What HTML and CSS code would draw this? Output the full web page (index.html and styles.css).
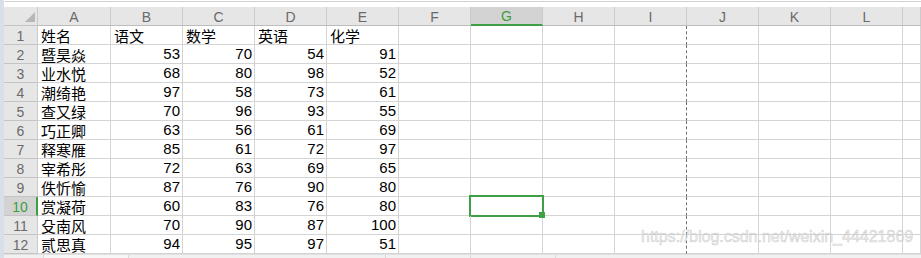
FILE: index.html
```html
<!DOCTYPE html>
<html lang="zh-CN">
<head>
    <meta charset="UTF-8">
    <title>Sheet1</title>
    <link rel="stylesheet" href="styles.css">
</head>
<body>
    <div class="app">
        <div class="side-strip"></div>
        <div class="main">
            <div class="top-bar"><span class="cut-text">216</span></div>
            <div class="sheet" id="sheet"></div>
            <div class="tab-bar">
                <span class="tab tab-a"></span>
                <span class="tab tab-b"></span>
                <span class="tab tab-c"></span>
                <span class="tab tab-d"></span>
                <span class="tab tab-e"></span>
            </div>
        </div>
        <div class="watermark">https://blog.csdn.net/weixin_44421869</div>
    </div>

    <script>
        const cols = ["A", "B", "C", "D", "E", "F", "G", "H", "I", "J", "K", "L", ""];
        const rows = [
            ["姓名", "语文", "数学", "英语", "化学"],
            ["暨昊焱", 53, 70, 54, 91],
            ["业水悦", 68, 80, 98, 52],
            ["潮绮艳", 97, 58, 73, 61],
            ["查又绿", 70, 96, 93, 55],
            ["巧正卿", 63, 56, 61, 69],
            ["释寒雁", 85, 61, 72, 97],
            ["宰希彤", 72, 63, 69, 65],
            ["佚忻愉", 87, 76, 90, 80],
            ["赏凝荷", 60, 83, 76, 80],
            ["殳南风", 70, 90, 87, 100],
            ["贰思真", 94, 95, 97, 51]
        ];
        const activeCol = 6;  // G
        const activeRow = 10;

        const sheet = document.getElementById("sheet");

        function cell(cls, text) {
            const div = document.createElement("div");
            div.className = cls;
            if (text !== undefined) div.textContent = text;
            sheet.appendChild(div);
            return div;
        }

        // column headers
        const corner = cell("hd corner");
        corner.appendChild(document.createElement("span")).className = "tri";
        cols.forEach((c, i) => {
            cell("hd col-hd" + (i === activeCol ? " active" : ""), c);
        });

        // body rows
        rows.forEach((row, r) => {
            const num = r + 1;
            cell("hd row-hd" + (num === activeRow ? " active" : ""), num);
            cols.forEach((c, i) => {
                let cls = "cell";
                let val = row[i];
                if (typeof val === "number") cls += " num";
                if (i === 8) cls += " page-break";
                if (i === activeCol && num === activeRow) cls += " selected";
                cell(cls, val === undefined ? "" : val);
            });
        });
    </script>
</body>
</html>
```

FILE: styles.css
```css
* {
    box-sizing: border-box;
}

body {
    margin: 0;
    background: #fff;
    overflow: hidden;
}

.app {
    display: flex;
    height: 258px;
    position: relative;
}

.side-strip {
    width: 4px;
    flex: none;
    background-color: #d9dfe9;
}

.main {
    flex: 1;
    display: flex;
    flex-direction: column;
}

.top-bar {
    height: 7px;
    border-top: 1px solid #fff;
    overflow: hidden;
    position: relative;
}

.top-bar::before {
    content: "";
    display: block;
    height: 1px;
    background-color: #d0d0d0;
    margin-left: 1px;
}

.cut-text {
    position: absolute;
    left: 98px;
    top: -11px;
    font: 12px "Liberation Sans", sans-serif;
    color: #222;
}

.sheet {
    display: grid;
    grid-template-columns: 34px 73px repeat(11, 72px) 1fr;
    grid-auto-rows: 19px;
    font-family: "Liberation Sans Narrow", "Liberation Sans", "Noto Sans CJK SC", sans-serif;
}

.hd {
    background-color: #e6e6e6;
    border-right: 1px solid #cbcbcb;
    border-bottom: 1px solid #c4c4c4;
    color: #6a6a6a;
    display: flex;
    align-items: center;
    justify-content: center;
    font-family: "Liberation Sans", sans-serif;
    font-size: 14px;
    padding-top: 1px;
}

.col-hd {
    border-bottom-color: #bcbcbc;
}

.corner {
    justify-content: flex-end;
    align-items: flex-end;
    padding: 0 2px 3px 0;
}

.tri {
    width: 0;
    height: 0;
    border-left: 10px solid transparent;
    border-bottom: 10px solid #b7b7b7;
}

.col-hd.active {
    background-color: #d3d3d3;
    color: #3c9e3c;
    border-bottom: 2px solid #3f9f44;
}

.row-hd.active {
    background-color: #d3d3d3;
    color: #3c9e3c;
    border-right: 2px solid #3f9f44;
}

.cell {
    border-right: 1px solid #d4d4d4;
    border-bottom: 1px solid #d4d4d4;
    font-family: "Noto Sans CJK SC", sans-serif;
    font-size: 15px;
    line-height: 17px;
    color: #000;
    padding: 0 2px 0 3px;
    display: flex;
    align-items: flex-end;
    white-space: nowrap;
    position: relative;
}

.cell.num {
    justify-content: flex-end;
    font-family: "Liberation Sans Narrow", "Liberation Sans", sans-serif;
    font-stretch: condensed;
    font-size: 15px;
    line-height: 16px;
    padding-bottom: 1px;
}

.cell.page-break {
    border-right: 1px dashed #6e6e6e;
}

.cell.selected::after {
    content: "";
    position: absolute;
    left: -2px;
    top: -2px;
    right: -2px;
    bottom: -2px;
    border: 2px solid #3f9f44;
}

.cell.selected::before {
    content: "";
    position: absolute;
    right: -3px;
    bottom: -3px;
    width: 6px;
    height: 6px;
    background-color: #3f9f44;
    z-index: 1;
}

.tab-bar {
    flex: 1;
    background-color: #f1f1f1;
    border-top: 1px solid #e0e0e0;
    display: flex;
}

.tab {
    border-right: 1px solid #dadada;
}

.tab-a { width: 40px; }
.tab-b { width: 85px; background-color: #f7f7f7; }
.tab-c { width: 257px; }
.tab-d { width: 85px; }
.tab-e { width: 85px; }

.watermark {
    position: absolute;
    left: 641px;
    top: 228px;
    font-family: "Liberation Sans", sans-serif;
    font-size: 16px;
    color: rgba(235, 235, 235, 0.85);
    -webkit-text-stroke: 0.5px rgba(170, 170, 170, 0.55);
    pointer-events: none;
}
```
